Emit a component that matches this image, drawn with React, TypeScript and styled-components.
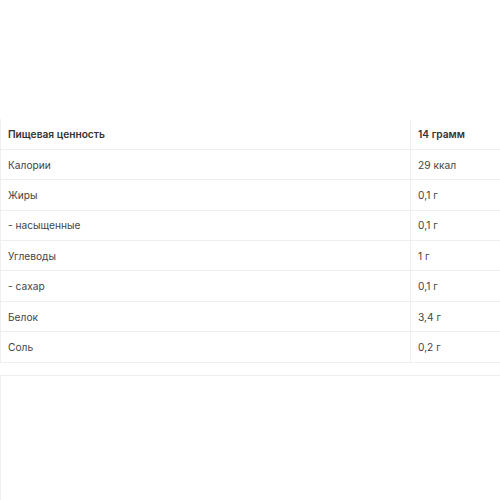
import React from "react";
import styled, { createGlobalStyle } from "styled-components";

const Global = createGlobalStyle`
  html, body { margin: 0; padding: 0; background: #fff; overflow: hidden; }
  body { font-family: Inter, "Noto Sans", sans-serif; color: #333; }
`;

const Page = styled.div`
  width: 500px;
  height: 500px;
  overflow: hidden;
  padding-top: 119px;
  box-sizing: border-box;
`;

const Table = styled.table`
  border-collapse: collapse;
  width: 640px;
  table-layout: fixed;
`;

const Row = styled.tr`
  height: 30.4px;
  border-bottom: 1px solid #efefef;
`;

const Cell = styled.td<{ $bold?: boolean }>`
  padding: 0 0 0 7px;
  font-size: 10.2px;
  font-weight: ${(p) => (p.$bold ? 600 : 400)};
  color: ${(p) => (p.$bold ? "#333" : "#444")};
  border-left: 1px solid #efefef;
  vertical-align: middle;
  white-space: nowrap;
`;

const NextBox = styled.div`
  margin-top: 12px;
  height: 200px;
  width: 640px;
  border-top: 1px solid #efefef;
  border-left: 1px solid #efefef;
`;

const rows: [string, string][] = [
  ["Калории", "29 ккал"],
  ["Жиры", "0,1 г"],
  ["- насыщенные", "0,1 г"],
  ["Углеводы", "1 г"],
  ["- сахар", "0,1 г"],
  ["Белок", "3,4 г"],
  ["Соль", "0,2 г"],
];

export default function App() {
  return (
    <>
      <Global />
      <Page>
        <Table>
          <colgroup>
            <col style={{ width: 410 }} />
            <col />
          </colgroup>
          <tbody>
            <Row>
              <Cell $bold>Пищевая ценность</Cell>
              <Cell $bold>14 грамм</Cell>
            </Row>
            {rows.map(([a, b]) => (
              <Row key={a}>
                <Cell>{a}</Cell>
                <Cell>{b}</Cell>
              </Row>
            ))}
          </tbody>
        </Table>
        <NextBox />
      </Page>
    </>
  );
}
